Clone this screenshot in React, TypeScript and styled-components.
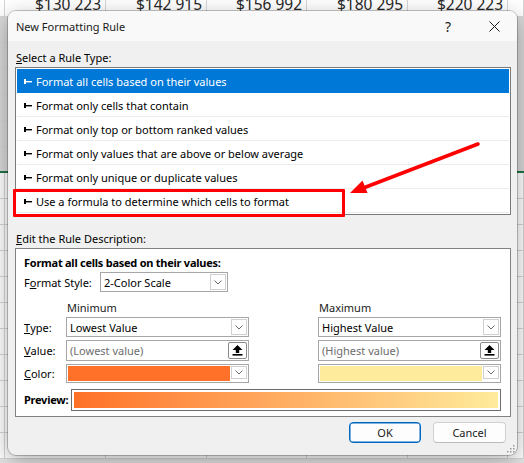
import React from "react";
import styled, { createGlobalStyle, css } from "styled-components";

const GlobalStyle = createGlobalStyle`
  html, body {
    margin: 0;
    padding: 0;
  }
  body {
    width: 524px;
    height: 463px;
    overflow: hidden;
    background: #ffffff;
    font-family: "Noto Sans", "Liberation Sans", sans-serif;
  }
`;

const Page = styled.div`
  position: relative;
  width: 524px;
  height: 463px;
  overflow: hidden;
  background: #e4e4e4;
`;

/* ---------- spreadsheet behind the dialog ---------- */

const Sheet = styled.div`
  display: flex;
  flex-direction: column;
  margin-top: -9px;
  background: #ffffff;
`;

const SheetRow = styled.div<{ $shaded?: boolean; $edge?: boolean }>`
  display: grid;
  grid-template-columns: 5px 101px 101px 100px 101px 100px 1fr;
  height: 26px;
  box-sizing: border-box;
  border-bottom: 1px solid #d6d6d6;
  ${({ $shaded }) =>
    $shaded &&
    css`
      background: #d9d9d9;
    `}
  ${({ $edge }) =>
    $edge &&
    css`
      border-bottom: 2px solid #217346;
    `}
`;

const SheetCell = styled.div`
  box-sizing: border-box;
  border-right: 1px solid #d6d6d6;
  padding-right: 4px;
  text-align: right;
  font-family: "Noto Sans", sans-serif;
  font-size: 15.5px;
  line-height: 26px;
  color: #262626;
  white-space: nowrap;
  overflow: hidden;
`;

/* ---------- dialog ---------- */

const Dialog = styled.div`
  position: absolute;
  left: 8px;
  top: 11px;
  width: 509px;
  height: 444px;
  box-sizing: border-box;
  display: flex;
  flex-direction: column;
  border-radius: 8px;
  background: #f0f0f0;
  box-shadow: 0 0 0 1px rgba(0, 0, 0, 0.22), 0 6px 22px rgba(0, 0, 0, 0.32);
  font-size: 11px;
  color: #000;
`;

const TitleBar = styled.div`
  display: flex;
  align-items: center;
  height: 30px;
  flex-shrink: 0;
  padding-left: 8px;
  border-radius: 8px 8px 0 0;
  background: #f9f9f9;
`;

const Title = styled.span`
  flex: 1;
  font-size: 11px;
  color: #1a1a1a;
`;

const CaptionButton = styled.div`
  width: 46px;
  height: 30px;
  display: flex;
  align-items: center;
  justify-content: center;
  font-size: 14px;
  color: #1a1a1a;
`;

const Body = styled.div`
  display: flex;
  flex-direction: column;
  padding: 0 6px 0 7px;
`;

const SectionLabel = styled.div<{ $gap: number }>`
  margin-top: ${({ $gap }) => $gap}px;
  padding-left: 1px;
  line-height: 16px;
`;

const Key = styled.u`
  text-underline-offset: 1px;
`;

const ListBox = styled.div`
  margin-top: 1px;
  padding: 1px;
  border: 1px solid #7a7a7a;
  background: #fff;
  display: flex;
  flex-direction: column;
`;

const RuleRow = styled.div<{ $selected?: boolean }>`
  height: 24px;
  box-sizing: border-box;
  display: flex;
  align-items: center;
  gap: 4px;
  padding: 2px 0 0 7px;
  border-bottom: 1px solid #ececec;
  color: #000;
  ${({ $selected }) =>
    $selected &&
    css`
      background: #0078d7;
      color: #fff;
      border-bottom-color: #0078d7;
    `}
`;

const DescBox = styled.div`
  margin-top: 1px;
  padding: 6px 9px 5px 8px;
  border: 1px solid #828282;
  background: #fff;
  display: flex;
  flex-direction: column;
`;

const BoldText = styled.div`
  font-weight: 700;
  line-height: 16px;
  letter-spacing: -0.25px;
`;

const StyleRow = styled.div`
  margin-top: 1px;
  height: 20px;
  display: flex;
  align-items: center;
`;

const StyleLabel = styled.span`
  width: 76px;
`;

const ScaleGrid = styled.div`
  margin-top: 6px;
  display: grid;
  grid-template-columns: 42px 183px 69px 183px;
  grid-template-rows: 16px 20px 21px 19px 25px;
  row-gap: 3px;
`;

const ColHead = styled.div<{ $col: number }>`
  grid-column: ${({ $col }) => $col};
  padding: 2px 0 0 1px;
  line-height: 16px;
  color: #1a1a1a;
`;

const FieldLabel = styled.div`
  grid-column: 1;
  display: flex;
  align-items: center;
`;

const Select = styled.div<{ $width?: number }>`
  ${({ $width }) =>
    $width &&
    css`
      width: ${$width}px;
      height: 20px;
    `}
  box-sizing: border-box;
  display: flex;
  align-items: center;
  padding: 0 1px 0 3px;
  border: 1px solid #a6a6a6;
  background: #fff;
  color: #000;
  white-space: nowrap;
`;

const SelectText = styled.span<{ $muted?: boolean }>`
  flex: 1;
  color: ${({ $muted }) => ($muted ? "#6d6d6d" : "#000")};
`;

const DropButton = styled.span`
  width: 16px;
  height: calc(100% - 2px);
  box-sizing: border-box;
  display: flex;
  align-items: center;
  justify-content: center;
  border: 1px solid #d0d0d0;
  background: #fff;
`;

const RefButton = styled.span`
  width: 19px;
  height: calc(100% - 2px);
  box-sizing: border-box;
  display: flex;
  align-items: center;
  justify-content: center;
  border: 1px solid #8a8a8a;
  border-radius: 2px;
  background: #fff;
`;

const ColorSelect = styled.div`
  box-sizing: border-box;
  display: flex;
  align-items: stretch;
  gap: 1px;
  padding: 1px;
  border: 1px solid #a6a6a6;
  background: #fff;
`;

const Swatch = styled.span<{ $color: string }>`
  flex: 1;
  background: ${({ $color }) => $color};
`;

const PreviewRow = styled.div`
  grid-column: 1 / -1;
  margin-top: 3px;
  display: flex;
  align-items: stretch;
`;

const PreviewLabel = styled(BoldText)`
  width: 47px;
  display: flex;
  align-items: center;
`;

const PreviewBox = styled.div`
  flex: 1;
  padding: 2px;
  border: 1px solid #6e6e6e;
  display: flex;
`;

const PreviewBar = styled.div<{ $from: string; $to: string }>`
  flex: 1;
  background: linear-gradient(to right, ${({ $from }) => $from}, ${({ $to }) => $to});
`;

const Footer = styled.div`
  margin-top: 5px;
  display: flex;
  justify-content: flex-end;
  gap: 12px;
  padding-right: 5px;
`;

const Button = styled.button<{ $primary?: boolean; $width: number }>`
  width: ${({ $width }) => $width}px;
  height: 21px;
  box-sizing: border-box;
  padding: 0;
  border-radius: 4px;
  border: 1px solid #d0d0d0;
  border-bottom-color: #bcbcbc;
  background: #fdfdfd;
  font-family: "Noto Sans", sans-serif;
  font-size: 11px;
  color: #1a1a1a;
  ${({ $primary }) =>
    $primary &&
    css`
      border: 1px solid #0067c0;
      box-shadow: inset 0 0 0 0.5px #0067c0;
    `}
`;

const Grip = styled.svg`
  position: absolute;
  right: 2px;
  bottom: 2px;
`;

/* ---------- screenshot annotations ---------- */

const Highlight = styled.div`
  position: absolute;
  left: 13px;
  top: 189px;
  width: 332px;
  height: 28px;
  box-sizing: border-box;
  border: 3px solid #ff0000;
  border-radius: 1px;
`;

const ArrowLayer = styled.svg`
  position: absolute;
  left: 0;
  top: 0;
  pointer-events: none;
`;

const RuleIcon = () => (
  <svg width="8" height="7" viewBox="0 0 8 7">
    <rect x="0" y="1" width="2" height="5" fill="currentColor" />
    <rect x="2" y="3" width="6" height="1.4" fill="currentColor" />
  </svg>
);

const Chevron = () => (
  <svg width="8" height="5" viewBox="0 0 8 5">
    <polyline points="0.5,0.5 4,4 7.5,0.5" fill="none" stroke="#6a6a6a" strokeWidth="1" />
  </svg>
);

const UpArrow = () => (
  <svg width="11" height="11" viewBox="0 0 11 11">
    <polygon points="5.5,0 10.5,5 7.2,5 7.2,8 3.8,8 3.8,5 0.5,5" fill="#000" />
    <rect x="0.5" y="9" width="10" height="1.6" fill="#000" />
  </svg>
);

const rules = [
  "Format all cells based on their values",
  "Format only cells that contain",
  "Format only top or bottom ranked values",
  "Format only values that are above or below average",
  "Format only unique or duplicate values",
  "Use a formula to determine which cells to format",
];

const headerValues = ["", "$130 223", "$142 915", "$156 992", "$180 295", "$220 223", ""];

const App = () => {
  const minColor = "#ff7128";
  const maxColor = "#ffeb9c";

  return (
    <Page>
      <GlobalStyle />
      <Sheet>
        <SheetRow>
          {headerValues.map((v, i) => (
            <SheetCell key={i}>{v}</SheetCell>
          ))}
        </SheetRow>
        {[0, 1, 2, 3, 4, 5].map((r) => (
          <SheetRow key={r} $shaded $edge={r === 5}>
            {headerValues.map((_, i) => (
              <SheetCell key={i} />
            ))}
          </SheetRow>
        ))}
        {[0, 1, 2, 3, 4, 5, 6, 7, 8, 9, 10].map((r) => (
          <SheetRow key={`b${r}`}>
            {headerValues.map((_, i) => (
              <SheetCell key={i} />
            ))}
          </SheetRow>
        ))}
      </Sheet>

      <Dialog>
        <TitleBar>
          <Title>New Formatting Rule</Title>
          <CaptionButton>?</CaptionButton>
          <CaptionButton>
            <svg width="11" height="11" viewBox="0 0 11 11">
              <path d="M0.5 0.5 L10.5 10.5 M10.5 0.5 L0.5 10.5" stroke="#1a1a1a" strokeWidth="1" />
            </svg>
          </CaptionButton>
        </TitleBar>

        <Body>
          <SectionLabel $gap={9}>
            <Key>S</Key>elect a Rule Type:
          </SectionLabel>
          <ListBox>
            {rules.map((rule, i) => (
              <RuleRow key={rule} $selected={i === 0}>
                <RuleIcon />
                <span>{rule}</span>
              </RuleRow>
            ))}
          </ListBox>

          <SectionLabel $gap={16}>
            <Key>E</Key>dit the Rule Description:
          </SectionLabel>
          <DescBox>
            <BoldText>Format all cells based on their values:</BoldText>
            <StyleRow>
              <StyleLabel>
                F<Key>o</Key>rmat Style:
              </StyleLabel>
              <Select $width={128}>
                <SelectText>2-Color Scale</SelectText>
                <DropButton>
                  <Chevron />
                </DropButton>
              </Select>
            </StyleRow>

            <ScaleGrid>
              <ColHead $col={2}>Minimum</ColHead>
              <ColHead $col={4}>Maximum</ColHead>

              <FieldLabel>
                <Key>T</Key>ype:
              </FieldLabel>
              <Select style={{ gridColumn: 2 }}>
                <SelectText>Lowest Value</SelectText>
                <DropButton>
                  <Chevron />
                </DropButton>
              </Select>
              <Select style={{ gridColumn: 4 }}>
                <SelectText>Highest Value</SelectText>
                <DropButton>
                  <Chevron />
                </DropButton>
              </Select>

              <FieldLabel>
                <Key>V</Key>alue:
              </FieldLabel>
              <Select style={{ gridColumn: 2 }}>
                <SelectText $muted>(Lowest value)</SelectText>
                <RefButton>
                  <UpArrow />
                </RefButton>
              </Select>
              <Select style={{ gridColumn: 4 }}>
                <SelectText $muted>(Highest value)</SelectText>
                <RefButton>
                  <UpArrow />
                </RefButton>
              </Select>

              <FieldLabel>
                <Key>C</Key>olor:
              </FieldLabel>
              <ColorSelect style={{ gridColumn: 2 }}>
                <Swatch $color={minColor} />
                <DropButton>
                  <Chevron />
                </DropButton>
              </ColorSelect>
              <ColorSelect style={{ gridColumn: 4 }}>
                <Swatch $color={maxColor} />
                <DropButton>
                  <Chevron />
                </DropButton>
              </ColorSelect>

              <PreviewRow>
                <PreviewLabel>Preview:</PreviewLabel>
                <PreviewBox>
                  <PreviewBar $from={minColor} $to={maxColor} />
                </PreviewBox>
              </PreviewRow>
            </ScaleGrid>
          </DescBox>

          <Footer>
            <Button $primary $width={72}>
              OK
            </Button>
            <Button $width={73}>Cancel</Button>
          </Footer>
        </Body>

        <Grip width="8" height="8" viewBox="0 0 8 8">
          {[
            [6, 0],
            [6, 3],
            [3, 3],
            [6, 6],
            [3, 6],
            [0, 6],
          ].map(([x, y]) => (
            <rect key={`${x}-${y}`} x={x} y={y} width="1.5" height="1.5" fill="#9a9a9a" />
          ))}
        </Grip>
      </Dialog>

      <Highlight />
      <ArrowLayer width="524" height="463" viewBox="0 0 524 463">
        <line x1="478" y1="144" x2="362" y2="188.5" stroke="#ff0000" strokeWidth="3.5" strokeLinecap="round" />
        <polygon points="350,193 367.5,193 362.5,180.5" fill="#ff0000" />
      </ArrowLayer>
    </Page>
  );
};

export default App;
